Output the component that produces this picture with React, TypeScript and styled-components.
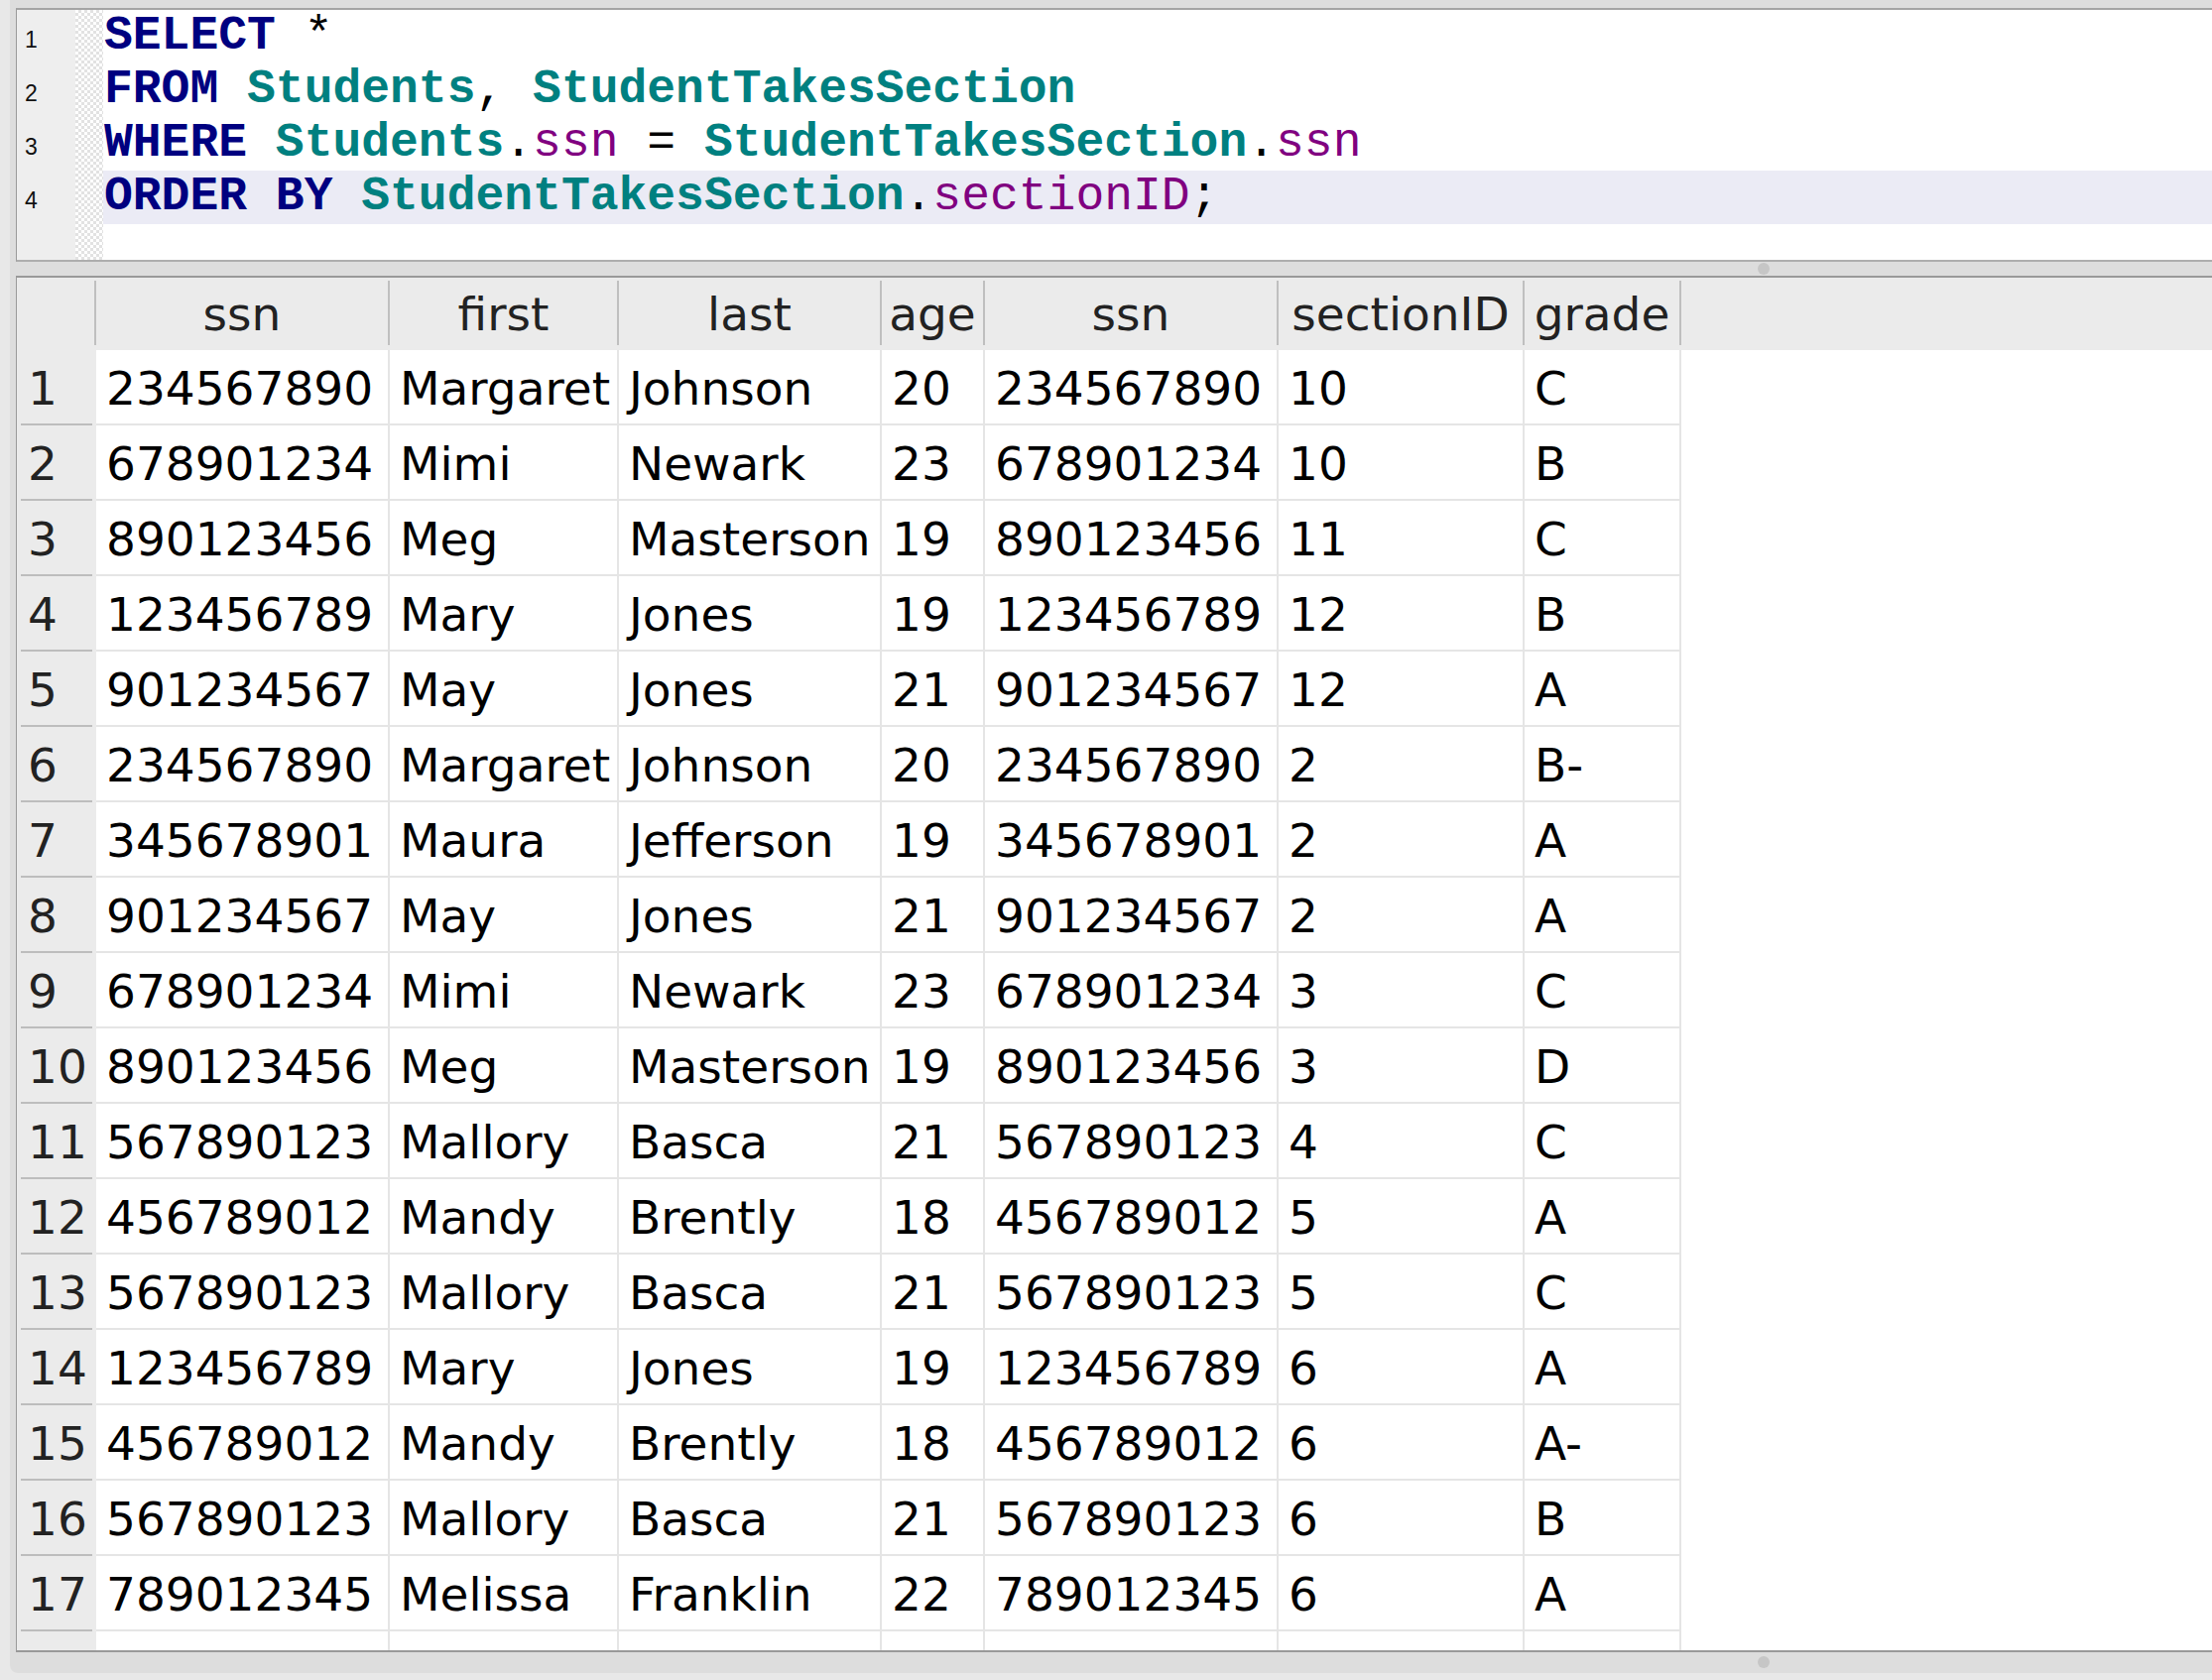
import styled, { createGlobalStyle } from "styled-components";

const GlobalStyle = createGlobalStyle`
    html, body {
        margin: 0;
        padding: 0;
        background: #e8e8e8;
        overflow: hidden;
    }
`

type TokenKind = "kw" | "table" | "col" | "plain";

const codeLines: [TokenKind, string][][] = [
    [["kw", "SELECT"], ["plain", " *"]],
    [["kw", "FROM"], ["plain", " "], ["table", "Students"], ["plain", ", "], ["table", "StudentTakesSection"]],
    [["kw", "WHERE"], ["plain", " "], ["table", "Students"], ["plain", "."], ["col", "ssn"], ["plain", " = "], ["table", "StudentTakesSection"], ["plain", "."], ["col", "ssn"]],
    [["kw", "ORDER BY"], ["plain", " "], ["table", "StudentTakesSection"], ["plain", "."], ["col", "sectionID"], ["plain", ";"]],
    [],
];

const columns = [
    { name: "ssn", width: 296 },
    { name: "first", width: 231 },
    { name: "last", width: 265 },
    { name: "age", width: 104 },
    { name: "ssn", width: 296 },
    { name: "sectionID", width: 248 },
    { name: "grade", width: 158 },
];

const rows: string[][] = [
    ["234567890", "Margaret", "Johnson", "20", "234567890", "10", "C"],
    ["678901234", "Mimi", "Newark", "23", "678901234", "10", "B"],
    ["890123456", "Meg", "Masterson", "19", "890123456", "11", "C"],
    ["123456789", "Mary", "Jones", "19", "123456789", "12", "B"],
    ["901234567", "May", "Jones", "21", "901234567", "12", "A"],
    ["234567890", "Margaret", "Johnson", "20", "234567890", "2", "B-"],
    ["345678901", "Maura", "Jefferson", "19", "345678901", "2", "A"],
    ["901234567", "May", "Jones", "21", "901234567", "2", "A"],
    ["678901234", "Mimi", "Newark", "23", "678901234", "3", "C"],
    ["890123456", "Meg", "Masterson", "19", "890123456", "3", "D"],
    ["567890123", "Mallory", "Basca", "21", "567890123", "4", "C"],
    ["456789012", "Mandy", "Brently", "18", "456789012", "5", "A"],
    ["567890123", "Mallory", "Basca", "21", "567890123", "5", "C"],
    ["123456789", "Mary", "Jones", "19", "123456789", "6", "A"],
    ["456789012", "Mandy", "Brently", "18", "456789012", "6", "A-"],
    ["567890123", "Mallory", "Basca", "21", "567890123", "6", "B"],
    ["789012345", "Melissa", "Franklin", "22", "789012345", "6", "A"],
    ["456789012", "Mandy", "Brently", "18", "456789012", "7", "B"],
];

const Window = styled.div`
    box-sizing: border-box;
    height: 1694px;
    padding-left: 10px;
    background: #e8e8e8;
`

const Panel = styled.div`
    box-sizing: border-box;
    display: flex;
    flex-direction: column;
    height: 1687px;
    padding: 8px 0 0 6px;
    background: #dddddd;
    border-bottom-left-radius: 8px;
`

const Editor = styled.div`
    box-sizing: border-box;
    display: flex;
    height: 256px;
    flex-shrink: 0;
    background: #ffffff;
    border-top: 2px solid #a4a4a4;
    border-bottom: 2px solid #adadad;
    border-left: 1px solid #9a9a9a;
`

const Gutter = styled.div`
    width: 59px;
    flex-shrink: 0;
    background: #eeeeee;
`

const LineNo = styled.div`
    box-sizing: border-box;
    display: flex;
    align-items: center;
    height: 54px;
    padding: 7px 0 0 8px;
    font-family: "Liberation Sans", Arial, sans-serif;
    font-size: 23px;
    color: #111111;
`

const Checker = styled.div`
    width: 28px;
    flex-shrink: 0;
    background: repeating-conic-gradient(#e2e2e2 0% 25%, #ffffff 0% 50%) 0 0 / 6px 6px;
`

const Code = styled.div`
    flex: 1;
    font-family: "Liberation Mono", "Courier New", monospace;
    font-size: 48px;
`

const CodeLine = styled.div<{ $active: boolean }>`
    height: 54px;
    line-height: 52px;
    padding-left: 1px;
    white-space: pre;
    background: ${(props) => props.$active ? "#ebebf5" : "transparent"};
`

const Token = styled.span<{ $kind: TokenKind }>`
    font-weight: ${(props) => props.$kind === "kw" || props.$kind === "table" ? 700 : 400};
    color: ${(props) =>
        props.$kind === "kw" ? "#000080" :
            props.$kind === "table" ? "#008080" :
                props.$kind === "col" ? "#800080" :
                    "#000000"
    };
`

const Splitter = styled.div`
    display: flex;
    align-items: center;
    height: 14px;
    flex-shrink: 0;
`

const Grip = styled.div`
    width: 12px;
    height: 12px;
    margin-left: 1756px;
    border-radius: 50%;
    background: #c6c6c6;
`

const Grid = styled.div`
    box-sizing: border-box;
    height: 1388px;
    flex-shrink: 0;
    overflow: hidden;
    background: #ffffff;
    border-top: 2px solid #999999;
    border-bottom: 2px solid #999999;
    border-left: 1px solid #9a9a9a;
    font-family: "DejaVu Sans", Verdana, sans-serif;
    font-size: 47px;
`

const HeaderRow = styled.div`
    display: flex;
    height: 73px;
    background: #ebebeb;
    color: #222222;
`

const HeadCell = styled.div<{ $w: number }>`
    display: flex;
    width: ${(props) => props.$w}px;
    flex-shrink: 0;
`

const HeadLabel = styled.div`
    flex: 1;
    line-height: 73px;
    text-align: center;
    white-space: nowrap;
`

const HeadDivider = styled.div`
    width: 2px;
    margin: 3px 0 5px;
    background: #bfbfbf;
`

const Row = styled.div`
    display: flex;
    height: 76px;
`

const RowHead = styled.div`
    box-sizing: border-box;
    width: 80px;
    flex-shrink: 0;
    padding: 0 4px;
    background: #ebebeb;
`

const RowNum = styled.div`
    box-sizing: border-box;
    display: flex;
    align-items: center;
    height: 100%;
    padding: 2px 0 0 7px;
    border-bottom: 2px solid #bdbdbd;
    color: #222222;
`

const Cell = styled.div<{ $w: number }>`
    box-sizing: border-box;
    display: flex;
    align-items: center;
    width: ${(props) => props.$w}px;
    flex-shrink: 0;
    padding: 2px 0 0 10px;
    border-right: 2px solid #e5e5e5;
    border-bottom: 2px solid #e5e5e5;
    white-space: nowrap;
    overflow: hidden;
    color: #000000;
`

const BottomBar = styled.div`
    display: flex;
    align-items: center;
    flex: 1;
    padding-bottom: 2px;
`

const App = () => {
    return (
        <>
            <GlobalStyle />
            <Window>
                <Panel>
                    <Editor>
                        <Gutter>
                            {[1, 2, 3, 4].map((n) => (
                                <LineNo key={n}>{n}</LineNo>
                            ))}
                        </Gutter>
                        <Checker />
                        <Code>
                            {codeLines.map((line, i) => (
                                <CodeLine key={i} $active={i === 3}>
                                    {line.map(([kind, text], j) => (
                                        <Token key={j} $kind={kind}>{text}</Token>
                                    ))}
                                </CodeLine>
                            ))}
                        </Code>
                    </Editor>
                    <Splitter>
                        <Grip />
                    </Splitter>
                    <Grid>
                        <HeaderRow>
                            <HeadCell $w={80}>
                                <HeadLabel />
                                <HeadDivider />
                            </HeadCell>
                            {columns.map((col, i) => (
                                <HeadCell key={i} $w={col.width}>
                                    <HeadLabel>{col.name}</HeadLabel>
                                    <HeadDivider />
                                </HeadCell>
                            ))}
                        </HeaderRow>
                        {rows.map((row, i) => (
                            <Row key={i}>
                                <RowHead>
                                    <RowNum>{i + 1}</RowNum>
                                </RowHead>
                                {row.map((value, j) => (
                                    <Cell key={j} $w={columns[j].width}>{value}</Cell>
                                ))}
                            </Row>
                        ))}
                    </Grid>
                    <BottomBar>
                        <Grip />
                    </BottomBar>
                </Panel>
            </Window>
        </>
    )
}

export default App;
